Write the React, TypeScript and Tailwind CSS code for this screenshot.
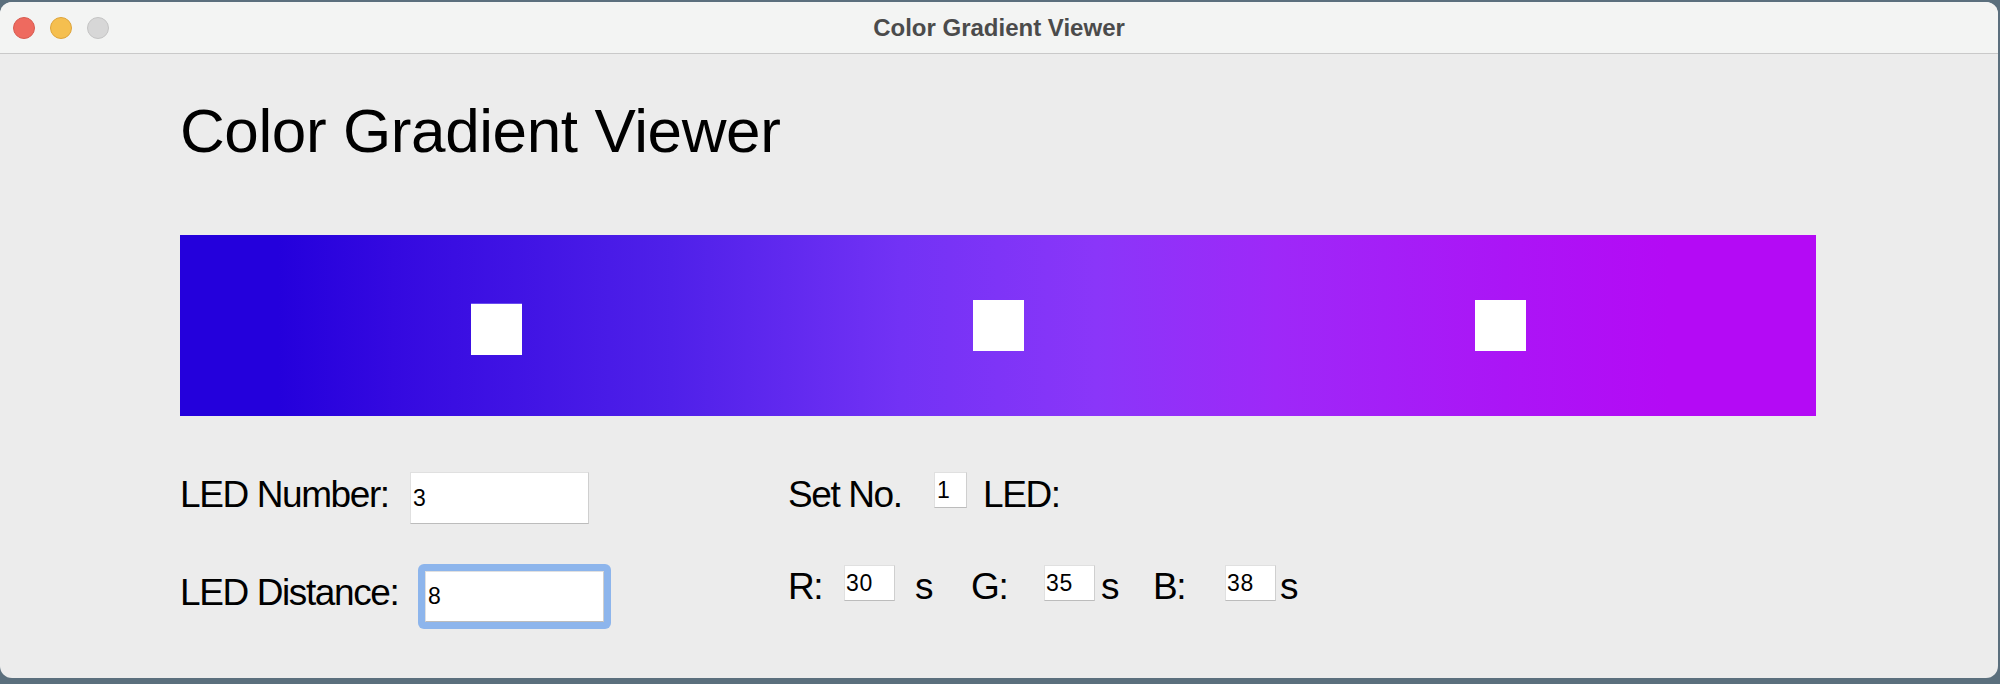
import React from "react";

const font = "font-['Liberation_Sans',Arial,sans-serif]";

function Field({ value, className }: { value: string; className: string }) {
  return (
    <input
      readOnly
      value={value}
      className={`${className} bg-white border border-[#e0e0e0] border-r-[#cfcfcf] border-b-[#bcbcbc] text-[23px] tracking-[0.6px] leading-none text-black outline-none ${font}`}
    />
  );
}

const label = "text-[37px] leading-[37px] tracking-[-1.4px] text-black whitespace-nowrap";

export default function App() {
  return (
    <div className={`w-[2000px] h-[684px] bg-[#5b6f7d] pt-[2px] ${font}`}>
      <div className="w-[1998px] h-[676px] rounded-[12px] overflow-hidden bg-[#ececec] flex flex-col">
        {/* Title bar */}
        <div className="h-[52px] shrink-0 bg-[#f3f4f3] border-b border-[#c9c9c9] grid grid-cols-[1fr_auto_1fr] items-center">
          <div className="flex items-center gap-[15px] pl-[13px]">
            <div className="w-[22px] h-[22px] rounded-full bg-[#ee6a5f] border border-[#d85b50]" />
            <div className="w-[22px] h-[22px] rounded-full bg-[#f5bf4f] border border-[#dea43a]" />
            <div className="w-[22px] h-[22px] rounded-full bg-[#d7d7d7] border border-[#c4c4c4]" />
          </div>
          <div className="text-[24px] font-bold text-[#4b4b4b] leading-none">Color Gradient Viewer</div>
          <div />
        </div>

        {/* Content */}
        <div className="pl-[180px]">
          <div className="mt-[46px] h-[62px] text-[62px] leading-[62px] tracking-[-0.4px] text-black">
            Color Gradient Viewer
          </div>

          <div className="mt-[73px] w-[1636px] h-[181px] flex items-center pl-[291px] gap-[451px] bg-[linear-gradient(to_right,#2400dc_0%,#2400dc_6%,#3409e0_13%,#4f20e9_30%,#7232f5_44%,#8a36f9_56%,#9e28f8_67%,#ab15f6_81%,#b40af5_91%,#b40af5_100%)]">
            <div className="w-[51px] h-[52px] mt-[7px] bg-white border-t border-[#6a4cf0]" />
            <div className="w-[51px] h-[51px] bg-white" />
            <div className="w-[51px] h-[51px] bg-white" />
          </div>

          <div className="mt-[56px] grid grid-cols-[608px_auto] gap-y-[40px]">
            {/* Row 1 left */}
            <div className="flex items-start h-[52px]">
              <div className={`${label} w-[230px] mt-[4px]`}>LED Number:</div>
              <Field value="3" className="w-[179px] h-[52px] pl-[2px]" />
            </div>
            {/* Row 1 right */}
            <div className="flex items-start h-[52px]">
              <div className={`${label} w-[146px] mt-[4px]`}>Set No.</div>
              <Field value="1" className="w-[33px] h-[36px] pl-[2px]" />
              <div className={`${label} ml-[16px] mt-[4px]`}>LED:</div>
            </div>

            {/* Row 2 left */}
            <div className="flex items-start h-[65px]">
              <div className={`${label} w-[238px] mt-[10px]`}>LED Distance:</div>
              <div className="w-[193px] h-[65px] rounded-[6px] bg-[#8db5ec] p-[7px]">
                <Field value="8" className="w-[179px] h-[51px] pl-[2px]" />
              </div>
            </div>
            {/* Row 2 right */}
            <div className="flex items-start h-[65px]">
              <div className={`${label} w-[56px] mt-[4px]`}>R:</div>
              <Field value="30" className="w-[51px] h-[36px] mt-[1px] pl-[1px]" />
              <div className={`${label} w-[76px] pl-[20px] mt-[4px]`}>s</div>
              <div className={`${label} w-[73px] mt-[4px]`}>G:</div>
              <Field value="35" className="w-[51px] h-[36px] mt-[1px] pl-[1px]" />
              <div className={`${label} w-[58px] pl-[6px] mt-[4px]`}>s</div>
              <div className={`${label} w-[72px] mt-[4px]`}>B:</div>
              <Field value="38" className="w-[51px] h-[36px] mt-[1px] pl-[1px]" />
              <div className={`${label} pl-[4px] mt-[4px]`}>s</div>
            </div>
          </div>
        </div>
      </div>
    </div>
  );
}
